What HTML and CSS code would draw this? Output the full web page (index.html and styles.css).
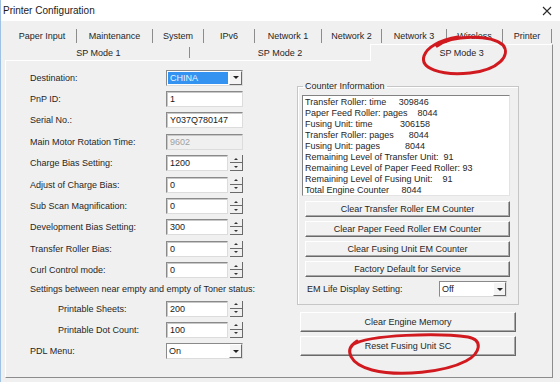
FILE: index.html
```html
<!DOCTYPE html>
<html lang="en">
<head>
    <meta charset="UTF-8">
    <title>Printer Configuration</title>
    <link rel="stylesheet" href="styles.css">
</head>
<body>
    <div class="window">
        <!-- Title bar -->
        <div class="titlebar">
            <span class="title">Printer Configuration</span>
            <svg class="close" width="10" height="10" viewBox="0 0 10 10">
                <path d="M1 1 L9 9 M9 1 L1 9" stroke="#2a2a2a" stroke-width="1.1" fill="none"/>
            </svg>
        </div>

        <div class="client">
            <!-- Tabs, back row -->
            <div class="tab-row">
                <div class="tab t-paper">Paper Input</div>
                <div class="tab t-maint">Maintenance</div>
                <div class="tab t-system">System</div>
                <div class="tab t-ipv6">IPv6</div>
                <div class="tab t-net1">Network 1</div>
                <div class="tab t-net2">Network 2</div>
                <div class="tab t-net3">Network 3</div>
                <div class="tab t-wifi">Wireless</div>
                <div class="tab t-printer">Printer</div>
            </div>
            <!-- Tabs, front row -->
            <div class="tab-row front">
                <div class="tab">SP Mode 1</div>
                <div class="tab plain">SP Mode 2</div>
                <div class="tab active">SP Mode 3</div>
            </div>

            <div class="panel">
                <!-- Left settings -->
                <div class="form">
                    <span class="label">Destination:</span>
                    <div class="combo">
                        <span class="combo-value selected">CHINA</span>
                        <span class="drop"></span>
                    </div>

                    <span class="label">PnP ID:</span>
                    <input class="field" type="text" value="1">

                    <span class="label">Serial No.:</span>
                    <input class="field" type="text" value="Y037Q780147">

                    <span class="label">Main Motor Rotation Time:</span>
                    <input class="field" type="text" value="9602" disabled>

                    <span class="label">Charge Bias Setting:</span>
                    <div class="spin-field">
                        <input class="field" type="text" value="1200">
                        <div class="spinner"><span class="up"></span><span class="down"></span></div>
                    </div>

                    <span class="label">Adjust of Charge Bias:</span>
                    <div class="spin-field">
                        <input class="field" type="text" value="0">
                        <div class="spinner"><span class="up"></span><span class="down"></span></div>
                    </div>

                    <span class="label">Sub Scan Magnification:</span>
                    <div class="spin-field">
                        <input class="field" type="text" value="0">
                        <div class="spinner"><span class="up"></span><span class="down"></span></div>
                    </div>

                    <span class="label">Development Bias Setting:</span>
                    <div class="spin-field">
                        <input class="field" type="text" value="300">
                        <div class="spinner"><span class="up"></span><span class="down"></span></div>
                    </div>

                    <span class="label">Transfer Roller Bias:</span>
                    <div class="spin-field">
                        <input class="field" type="text" value="0">
                        <div class="spinner"><span class="up"></span><span class="down"></span></div>
                    </div>

                    <span class="label">Curl Control mode:</span>
                    <div class="spin-field">
                        <input class="field" type="text" value="0">
                        <div class="spinner"><span class="up"></span><span class="down"></span></div>
                    </div>

                    <span class="label note">Settings between near empty and empty of Toner status:</span>

                    <span class="label indent">Printable Sheets:</span>
                    <div class="spin-field">
                        <input class="field" type="text" value="200">
                        <div class="spinner"><span class="up"></span><span class="down"></span></div>
                    </div>

                    <span class="label indent">Printable Dot Count:</span>
                    <div class="spin-field">
                        <input class="field" type="text" value="100">
                        <div class="spinner"><span class="up"></span><span class="down"></span></div>
                    </div>

                    <span class="label">PDL Menu:</span>
                    <div class="combo white">
                        <span class="combo-value">On</span>
                        <span class="drop"></span>
                    </div>
                </div>

                <!-- Right side: counters -->
                <div class="side">
                    <fieldset class="group">
                        <legend>Counter Information</legend>
                        <div class="listbox">
                            <div class="line">Transfer Roller: time     309846</div>
                            <div class="line">Paper Feed Roller: pages    8044</div>
                            <div class="line">Fusing Unit: time           306158</div>
                            <div class="line">Transfer Roller: pages      8044</div>
                            <div class="line">Fusing Unit: pages          8044</div>
                            <div class="line">Remaining Level of Transfer Unit:  91</div>
                            <div class="line">Remaining Level of Paper Feed Roller: 93</div>
                            <div class="line">Remaining Level of Fusing Unit:    91</div>
                            <div class="line">Total Engine Counter     8044</div>
                        </div>
                        <button class="btn">Clear Transfer Roller EM Counter</button>
                        <button class="btn">Clear Paper Feed Roller EM Counter</button>
                        <button class="btn">Clear Fusing Unit EM Counter</button>
                        <button class="btn">Factory Default for Service</button>
                        <div class="em-row">
                            <span>EM Life Display Setting:</span>
                            <div class="combo white em-combo">
                                <span class="combo-value">Off</span>
                                <span class="drop"></span>
                            </div>
                        </div>
                    </fieldset>
                    <button class="btn wide first">Clear Engine Memory</button>
                    <button class="btn wide">Reset Fusing Unit SC</button>
                </div>
            </div>
        </div>

        <!-- Red pen marks drawn over the dialog -->
        <svg class="marks" width="560" height="382" viewBox="0 0 560 382">
            <path d="M437 46 C452 35, 490 34, 503 45 C511 55, 499 70, 470 73 C440 76, 420 68, 424 56 C427 47, 440 40, 458 37"
                  fill="none" stroke="#d11a20" stroke-width="3" stroke-linecap="round"/>
            <path d="M352 345 C370 334, 440 333, 468 337 C483 340, 481 353, 466 361 C445 372, 400 377, 372 370 C350 364, 343 350, 357 341"
                  fill="none" stroke="#d11a20" stroke-width="3" stroke-linecap="round"/>
        </svg>
    </div>
</body>
</html>
```

FILE: styles.css
```css
* {
    box-sizing: border-box;
}

body {
    margin: 0;
    background-color: #f0f0f0;
    font-family: "Liberation Sans", Arial, sans-serif;
    font-size: 9px;
    color: #262626;
}

/* Dialog window */
.window {
    position: relative;
    width: 560px;
    height: 382px;
    overflow: hidden;
    background-color: #f0f0f0;
    border-left: 1px solid #9fc2e2;
}

.titlebar {
    height: 21px;
    background-color: #fff;
    display: flex;
    align-items: center;
    justify-content: space-between;
    padding: 0 8px 0 2px;
}

.title {
    font-size: 10px;
    color: #1a1a1a;
}

.client {
    padding: 5px 7px 0 4px;
}

/* Tabs */
.tab-row {
    display: flex;
    height: 18px;
    margin-left: 3px;
}

.tab-row.front {
    height: 16px;
}

.tab {
    flex: none;
    margin: 3px 0 1px;
    border-right: 1px solid #8c8c8c;
    display: flex;
    align-items: center;
    justify-content: center;
    white-space: nowrap;
}

.front .tab {
    flex: 1;
    margin: 3px 0 2px;
}

.front .tab.plain {
    border-right: none;
}

.front .tab.active {
    margin: 0 0 -1px;
    background-color: #f0f0f0;
    border-left: 1px solid #fff;
    border-top: 1px solid #fff;
    position: relative;
    z-index: 1;
}

.t-paper { width: 69px; }
.t-maint { width: 76px; }
.t-system { width: 51px; }
.t-ipv6 { width: 51px; }
.t-net1 { width: 67px; }
.t-net2 { width: 60px; }
.t-net3 { width: 65px; }
.t-wifi { width: 56px; }
.t-printer { width: 49px; }

/* Tab page */
.panel {
    height: 318px;
    display: flex;
    padding-left: 24px;
    border: 1px solid;
    border-color: #fff #8c8c8c #8c8c8c #fff;
}

.form {
    flex: none;
    width: 267px;
    padding-top: 6px;
    display: grid;
    grid-template-columns: 136px 78px;
    grid-template-rows: repeat(10, 21.4px) 17px repeat(3, 21.4px);
    align-items: center;
}

.label {
    white-space: nowrap;
}

.label.note {
    grid-column: 1 / -1;
}

.label.indent {
    padding-left: 28px;
}

/* Edit boxes */
.field {
    width: 77px;
    height: 16px;
    margin: 0;
    padding: 0 3px;
    font: inherit;
    color: #1a1a1a;
    background-color: #fff;
    border: 1px solid;
    border-color: #8a8a8a #dcdcdc #dcdcdc #8a8a8a;
    box-shadow: inset 1px 1px 0 #c8c8c8;
    outline: none;
}

.field:disabled {
    background-color: #f0f0f0;
    color: #a0a0a0;
}

.spin-field {
    display: flex;
    gap: 2px;
}

.spin-field .field {
    width: 62px;
}

.spinner {
    width: 13px;
    height: 16px;
    display: flex;
    flex-direction: column;
}

.spinner span {
    flex: 1;
    display: flex;
    align-items: center;
    justify-content: center;
    border-right: 1px solid #6a6a6a;
    border-bottom: 1px solid #6a6a6a;
}

.spinner .up::before {
    content: "";
    border-left: 2px solid transparent;
    border-right: 2px solid transparent;
    border-bottom: 2px solid #333;
}

.spinner .down::before {
    content: "";
    border-left: 2px solid transparent;
    border-right: 2px solid transparent;
    border-top: 2px solid #333;
}

/* Combo boxes */
.combo {
    width: 77px;
    height: 16px;
    display: flex;
    background-color: #fff;
    border: 1px solid;
    border-color: #8a8a8a #dcdcdc #dcdcdc #8a8a8a;
}

.combo-value {
    flex: 1;
    display: flex;
    align-items: center;
    padding: 0 2px;
    color: #1a1a1a;
}

.combo-value.selected {
    margin: 1px;
    background-color: #3492f0;
    color: #e8f4ff;
}

.drop {
    width: 13px;
    display: flex;
    align-items: center;
    justify-content: center;
    background-color: #f4f4f4;
    border: 1px solid;
    border-color: #fff #6a6a6a #6a6a6a #fff;
}

.drop::before {
    content: "";
    border-left: 3px solid transparent;
    border-right: 3px solid transparent;
    border-top: 3px solid #222;
}

/* Right column */
.side {
    flex: none;
    width: 219px;
    padding-top: 20px;
}

.group {
    width: 218px;
    margin: 0;
    padding: 3px 8px 7px 4px;
    border: 1px solid #c6c6c6;
    box-shadow: inset 1px 1px 0 #fff;
}

.group legend {
    margin-left: 1px;
    padding: 0 2px;
    line-height: 11px;
}

.listbox {
    height: 101px;
    padding: 1px 2px;
    background-color: #fff;
    border: 1px solid;
    border-color: #828282 #e3e3e3 #e3e3e3 #828282;
    line-height: 11px;
    overflow: hidden;
}

.listbox .line {
    white-space: pre;
}

.btn {
    display: flex;
    align-items: center;
    justify-content: center;
    width: 205px;
    height: 16px;
    margin: 4px 0 0 3px;
    padding: 0;
    font: inherit;
    color: #262626;
    background-color: #f2f2f2;
    border: 1px solid;
    border-color: #fff #696969 #696969 #fff;
    box-shadow: inset -1px -1px 0 #a8a8a8;
}

.listbox + .btn {
    margin-top: 5px;
}

.btn.wide {
    width: 216px;
    height: 20px;
    margin-left: 3px;
}

.btn.wide.first {
    margin-top: 7px;
}

.em-row {
    margin-top: 4px;
    height: 16px;
    display: flex;
    align-items: center;
    justify-content: space-between;
    padding: 0 3px 0 5px;
}

.em-combo {
    width: 68px;
}

/* Pen marks on the screenshot */
.marks {
    position: absolute;
    top: 0;
    left: -1px;
    pointer-events: none;
    z-index: 5;
}
```
